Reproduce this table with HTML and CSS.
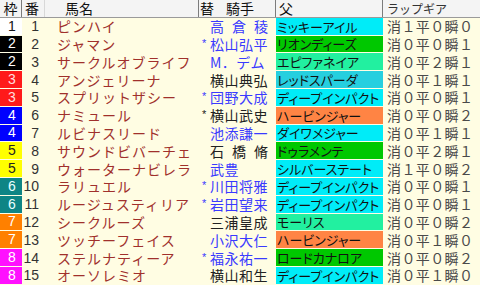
FILE: index.html
```html
<!DOCTYPE html>
<html lang="ja">
<head>
<meta charset="utf-8">
<link rel="stylesheet" href="styles.css">
</head>
<body>
<div class="sheet">
  <div class="hd">
    <div class="h waku-h">枠</div>
    <div class="h ban-h">番</div>
    <div class="h name-h">馬名</div>
    <div class="h jk-h">替<span class="sp"></span>騎手</div>
    <div class="h fa-h">父</div>
    <div class="h lap-h">ラップギア</div>
  </div>

  <div class="row"><div class="waku w1">1</div><div class="ban">1</div><div class="name">ピンハイ</div><div class="jk blue"><span class="nm j3">高倉稜</span></div><div class="fa dp">ミッキーアイル</div><div class="lap">消１平０瞬０</div></div>
  <div class="row"><div class="waku w2">2</div><div class="ban">2</div><div class="name">ジャマン</div><div class="jk blue"><span class="ast">*</span><span class="nm">松山弘平</span></div><div class="fa gr">リオンディーズ</div><div class="lap">消０平０瞬１</div></div>
  <div class="row"><div class="waku w2">2</div><div class="ban">3</div><div class="name">サークルオブライフ</div><div class="jk blue"><span class="nm">M．デム</span></div><div class="fa mt">エピファネイア</div><div class="lap">消０平２瞬１</div></div>
  <div class="row"><div class="waku w3">3</div><div class="ban">4</div><div class="name">アンジェリーナ</div><div class="jk"><span class="nm">横山典弘</span></div><div class="fa cy2">レッドスパーダ</div><div class="lap">消０平１瞬１</div></div>
  <div class="row"><div class="waku w3">3</div><div class="ban">5</div><div class="name">スプリットザシー</div><div class="jk blue"><span class="ast">*</span><span class="nm">団野大成</span></div><div class="fa dp">ディープインパクト</div><div class="lap">消０平０瞬１</div></div>
  <div class="row"><div class="waku w4">4</div><div class="ban">6</div><div class="name">ナミュール</div><div class="jk"><span class="ast">*</span><span class="nm">横山武史</span></div><div class="fa or">ハービンジャー</div><div class="lap">消０平０瞬２</div></div>
  <div class="row"><div class="waku w4">4</div><div class="ban">7</div><div class="name">ルビナスリード</div><div class="jk blue"><span class="nm">池添謙一</span></div><div class="fa dp">ダイワメジャー</div><div class="lap">消０平１瞬１</div></div>
  <div class="row"><div class="waku w5">5</div><div class="ban">8</div><div class="name">サウンドビバーチェ</div><div class="jk"><span class="nm j3">石橋脩</span></div><div class="fa gr">ドゥラメンテ</div><div class="lap">消０平２瞬１</div></div>
  <div class="row"><div class="waku w5">5</div><div class="ban">9</div><div class="name">ウォーターナビレラ</div><div class="jk blue"><span class="nm">武豊</span></div><div class="fa dp">シルバーステート</div><div class="lap">消１平０瞬２</div></div>
  <div class="row"><div class="waku w6">6</div><div class="ban">10</div><div class="name">ラリュエル</div><div class="jk blue"><span class="ast">*</span><span class="nm">川田将雅</span></div><div class="fa dp">ディープインパクト</div><div class="lap">消０平０瞬１</div></div>
  <div class="row"><div class="waku w6">6</div><div class="ban">11</div><div class="name">ルージュスティリア</div><div class="jk blue"><span class="ast">*</span><span class="nm">岩田望来</span></div><div class="fa dp">ディープインパクト</div><div class="lap">消０平０瞬１</div></div>
  <div class="row"><div class="waku w7">7</div><div class="ban">12</div><div class="name">シークルーズ</div><div class="jk"><span class="nm">三浦皇成</span></div><div class="fa mt">モーリス</div><div class="lap">消０平０瞬２</div></div>
  <div class="row"><div class="waku w7">7</div><div class="ban">13</div><div class="name">ツッチーフェイス</div><div class="jk blue"><span class="nm">小沢大仁</span></div><div class="fa or">ハービンジャー</div><div class="lap">消０平１瞬０</div></div>
  <div class="row"><div class="waku w8">8</div><div class="ban">14</div><div class="name">ステルナティーア</div><div class="jk blue"><span class="ast">*</span><span class="nm">福永祐一</span></div><div class="fa gr">ロードカナロア</div><div class="lap">消０平０瞬２</div></div>
  <div class="row"><div class="waku w8">8</div><div class="ban">15</div><div class="name">オーソレミオ</div><div class="jk"><span class="nm">横山和生</span></div><div class="fa dp">ディープインパクト</div><div class="lap">消０平１瞬０</div></div>
</div>
</body>
</html>
```

FILE: styles.css
```css
html, body {
  margin: 0;
  padding: 0;
  background: #fffde3;
}

.sheet {
  width: 480px;
  height: 285px;
  display: flex;
  flex-direction: column;
  font-family: "Noto Sans CJK JP", "Noto Sans", sans-serif;
  font-size: 14px;
  color: #222;
}

.hd,
.row {
  display: grid;
  grid-template-columns: 22px 23px 154px 77px 107px 97px;
  height: 17.8px;
  flex: 0 0 17.8px;
}

.hd {
  background: #f4f4f4;
  border-bottom: 1px solid #9a9a9a;
  box-sizing: border-box;
}

.h {
  display: flex;
  align-items: center;
  line-height: 15px;
  color: #111;
  box-sizing: border-box;
}

.waku-h {
  justify-content: center;
  border-right: 1px solid #7c7c7c;
}

.ban-h {
  padding-left: 3px;
  border-right: 1px solid #d8d8d8;
}

.name-h {
  padding-left: 20px;
  border-right: 1px solid #7c7c7c;
}

.jk-h {
  padding-left: 1px;
  border-right: 1px solid #7c7c7c;
}

.jk-h .sp {
  display: inline-block;
  width: 12px;
}

.fa-h {
  padding-left: 3px;
  border-right: 1px solid #7c7c7c;
}

.lap-h {
  padding-left: 4px;
  font-size: 12px;
  color: #333;
}

.row > div {
  display: flex;
  align-items: center;
  line-height: 15px;
  box-sizing: border-box;
  white-space: nowrap;
}

.waku {
  justify-content: center;
  margin-bottom: 1px;
  color: #fff;
  font-family: "Liberation Sans", "Noto Sans", sans-serif;
  font-size: 14px;
  padding-left: 2px;
}

.w1 { background: #ffffff; color: #111; }
.w2 { background: #000000; color: #fff; }
.w3 { background: #ff1a1a; color: #ffdede; }
.w4 { background: #0000ff; color: #fff; }
.w5 { background: #ffff00; color: #222; }
.w6 { background: #0e8585; color: #e8ffff; }
.w7 { background: #ff8000; color: #fff; }
.w8 { background: #ff10ff; color: #fff; }

.ban {
  justify-content: flex-end;
  padding-right: 6px;
  color: #333;
  font-family: "Liberation Sans", "Noto Sans", sans-serif;
  font-size: 14px;
}

.name {
  padding-left: 12px;
  color: #a0302c;
  letter-spacing: 1px;
}

.jk {
  padding-left: 11px;
  color: #222;
}

.jk.blue {
  color: #3a3aff;
}

.ast {
  display: inline-block;
  width: 8px;
  margin-left: -8px;
  font-size: 11px;
  font-family: "Liberation Sans", sans-serif;
  position: relative;
  top: -1px;
}

.nm {
  letter-spacing: 0.5px;
}

.nm.j3 {
  display: inline-block;
  width: 58px;
  letter-spacing: 0;
  text-align: justify;
  text-align-last: justify;
}

.fa {
  margin-bottom: 1px;
  padding-left: 1px;
  font-size: 13px;
  color: #111;
  font-feature-settings: "palt";
}

.dp  { background: #00ecf8; }
.cy2 { background: #26cfdf; }
.gr  { background: #00c800; }
.mt  { background: #22f0a0; }
.or  { background: #ff8444; }

.lap {
  padding-left: 4px;
  color: #4a4a4a;
  letter-spacing: 0.4px;
}
```
